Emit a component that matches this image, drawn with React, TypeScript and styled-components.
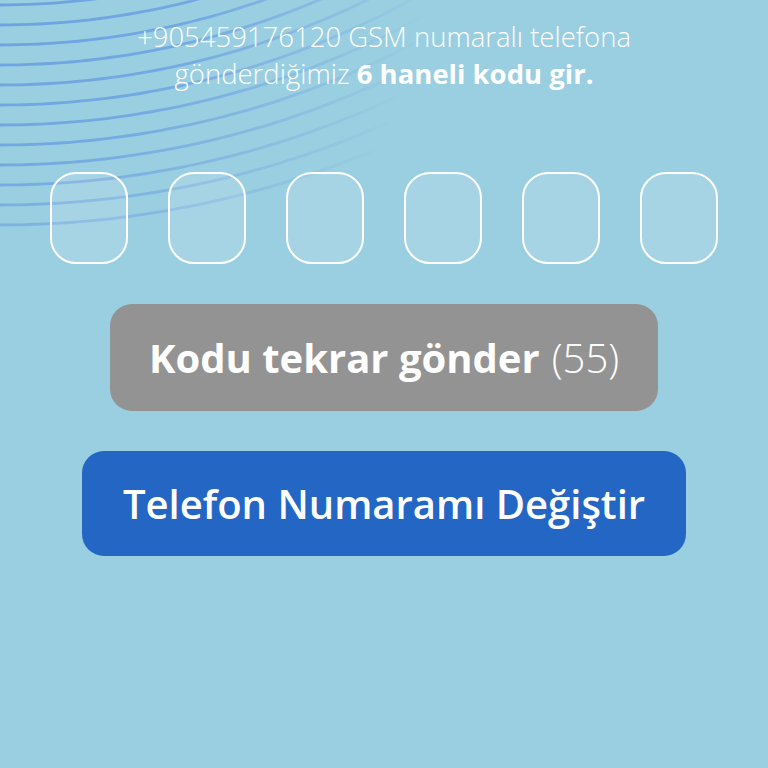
import React from "react";
import styled, { createGlobalStyle } from "styled-components";

const GlobalStyle = createGlobalStyle`
  html, body {
    margin: 0;
    padding: 0;
    background: #9acee1;
  }
  * { box-sizing: border-box; }
`;

const Screen = styled.div`
  position: relative;
  width: 768px;
  height: 768px;
  overflow: hidden;
  background: #9acee1;
  font-family: "Open Sans", "Lato", sans-serif;
  color: #ffffff;
  display: flex;
  flex-direction: column;
  align-items: center;
  padding-top: 18px;
`;

const Waves = styled.svg`
  position: absolute;
  left: 0;
  top: 0;
  width: 768px;
  height: 300px;
  pointer-events: none;
`;

const Content = styled.div`
  position: relative;
  display: flex;
  flex-direction: column;
  align-items: center;
  width: 100%;
`;

const Intro = styled.p`
  margin: 0;
  text-align: center;
  font-size: 27.5px;
  line-height: 37px;
  font-weight: 300;
`;

const Strong = styled.strong`
  font-weight: 700;
`;

const CodeRow = styled.div`
  margin-top: 80px;
  display: flex;
  gap: 40px;
`;

const CodeBox = styled.div`
  width: 78px;
  height: 92px;
  border: 2px solid #ffffff;
  border-radius: 26px;
  background: rgba(255, 255, 255, 0.12);
`;

const Button = styled.button<{ $tone: "gray" | "blue"; $w: number; $h: number }>`
  margin-top: 40px;
  width: ${(p) => p.$w}px;
  height: ${(p) => p.$h}px;
  border: none;
  border-radius: 22px;
  background: ${(p) => (p.$tone === "gray" ? "#939393" : "#2366c4")};
  color: #ffffff;
  font-family: "Open Sans", "Lato", sans-serif;
  font-size: 40px;
  font-weight: ${(p) => (p.$tone === "gray" ? 700 : 600)};
  display: flex;
  align-items: center;
  justify-content: center;
  padding: 0;
`;

const Light = styled.span`
  font-weight: 300;
  margin-left: 12px;
`;

const radii = Array.from({ length: 12 }, (_, i) => 755 + i * 20);

function wavePath(r: number) {
  const cy = -750;
  const pts: string[] = [];
  for (let x = -10; x <= 700; x += 10) {
    const v = r * r - x * x;
    if (v <= 0) break;
    const y = cy + Math.sqrt(v);
    pts.push(`${x} ${y.toFixed(1)}`);
    if (y < -10) break;
  }
  return "M " + pts.join(" L ");
}

export default function App() {
  return (
    <>
      <GlobalStyle />
      <Screen>
        <Waves viewBox="0 0 768 300">
          <defs>
            <radialGradient id="fade" cx="-20" cy="-60" r="450" gradientUnits="userSpaceOnUse">
              <stop offset="0" stopColor="#fff" stopOpacity="1" />
              <stop offset="0.5" stopColor="#fff" stopOpacity="0.8" />
              <stop offset="1" stopColor="#fff" stopOpacity="0" />
            </radialGradient>
            <mask id="m">
              <rect x="0" y="0" width="768" height="300" fill="url(#fade)" />
            </mask>
          </defs>
          <g mask="url(#m)" fill="none" stroke="#6a9fe2" strokeWidth="2.8">
            {radii.map((r) => (
              <path key={r} d={wavePath(r)} />
            ))}
          </g>
        </Waves>
        <Content>
          <Intro>
            +905459176120 GSM numaralı telefona
            <br />
            gönderdiğimiz <Strong>6 haneli kodu gir.</Strong>
          </Intro>
          <CodeRow>
            {[0, 1, 2, 3, 4, 5].map((i) => (
              <CodeBox key={i} />
            ))}
          </CodeRow>
          <Button $tone="gray" $w={548} $h={107}>
            Kodu tekrar gönder<Light>(55)</Light>
          </Button>
          <Button $tone="blue" $w={604} $h={105}>
            Telefon Numaramı Değiştir
          </Button>
        </Content>
      </Screen>
    </>
  );
}
